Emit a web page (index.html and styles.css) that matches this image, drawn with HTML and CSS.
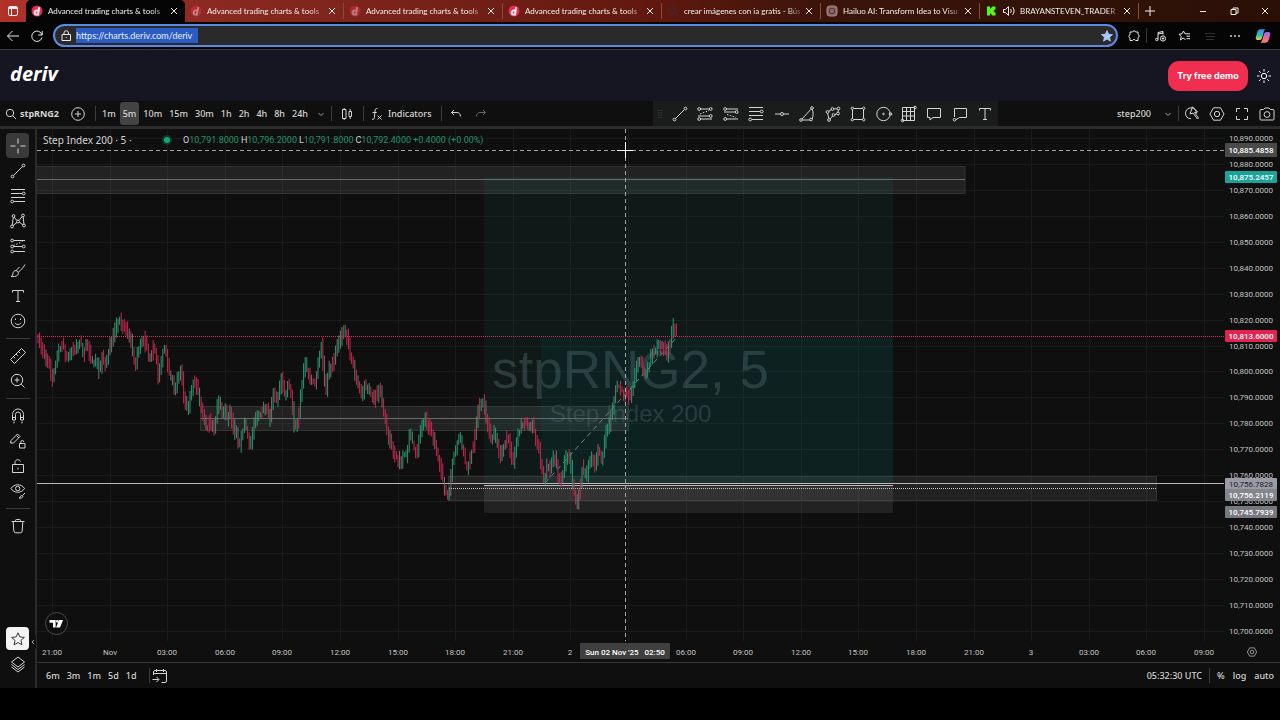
FILE: index.html
```html
<!DOCTYPE html>
<html lang="en">
<head>
    <meta charset="UTF-8">
    <meta name="viewport" content="width=device-width, initial-scale=1.0">
    <title>Advanced trading charts &amp; tools</title>
    <link rel="stylesheet" href="styles.css">
</head>
<body>
    <!-- Icon sprite -->
    <svg class="sprite" aria-hidden="true">
        <symbol id="i-close" viewBox="0 0 18 18"><path d="M6 6l6 6M12 6l-6 6"/></symbol>
        <symbol id="i-plus" viewBox="0 0 18 18"><path d="M9 4v10M4 9h10"/></symbol>
        <symbol id="i-deriv" viewBox="0 0 18 18"><circle class="brand" cx="9" cy="9" r="5.5"/><path class="thick" d="M11.2 5.2l-1.2 7.3H8.2a1.5 1.5 0 0 1-1.5-1.9c.2-1.2 1-2 2.1-2h1.7"/></symbol>
        <symbol id="i-search" viewBox="0 0 18 18"><circle cx="8" cy="8" r="3.7"/><path d="M10.8 10.8l3.2 3.2"/></symbol>
        <symbol id="i-addcircle" viewBox="0 0 18 18"><circle cx="9" cy="9" r="6.3"/><path d="M9 6v6M6 9h6"/></symbol>
        <symbol id="i-chevron" viewBox="0 0 18 18"><path d="M6.5 8L9 10.5 11.5 8"/></symbol>
        <symbol id="i-candles" viewBox="0 0 18 18"><path d="M4.500 4.500h3.500v9H4.500zM6.200 3v1.500M6.200 13.500V15M11 6.500h2.500v5H11zM12.200 4v2.500M12.200 11.500V14"/></symbol>
        <symbol id="i-fx" viewBox="0 0 18 18"><path d="M9.500 3.500C7.500 3 7.200 4.300 7 6l-.6 6.500c-.2 1.500-.8 2.200-2.400 1.800M4.500 7.500h4.200M9.500 10.500l4 4M13.500 10.500l-4 4"/></symbol>
        <symbol id="i-undo" viewBox="0 0 18 18"><path d="M7 5L4.500 7.500 7 10M4.500 7.500H10c2.300 0 3.500 1.500 3.500 4"/></symbol>
        <symbol id="i-redo" viewBox="0 0 18 18"><path d="M11 5l2.500 2.500L11 10M13.500 7.500H8c-2.300 0-3.500 1.500-3.500 4"/></symbol>
        <symbol id="i-cross" viewBox="0 0 18 18"><path d="M9 1.500v5M9 11.500v5M1.500 9h5M11.500 9h5"/></symbol>
        <symbol id="i-trend" viewBox="0 0 18 18"><circle cx="3.500" cy="14.500" r="1.400"/><circle cx="14.500" cy="3.500" r="1.400"/><path d="M4.500 13.500l9-9"/></symbol>
        <symbol id="i-fib" viewBox="0 0 18 18"><path d="M2 2.500h14M2 6.500h11M2 10.500h14M5 14.500h11"/><circle cx="14.700" cy="6.500" r="1.400"/><circle cx="3.200" cy="14.500" r="1.400"/></symbol>
        <symbol id="i-pattern" viewBox="0 0 18 18"><circle cx="4.500" cy="4" r="1.400"/><circle cx="3" cy="14.500" r="1.400"/><circle cx="9" cy="9.500" r="1.400"/><circle cx="14" cy="3.500" r="1.400"/><circle cx="15" cy="13.500" r="1.400"/><path d="M4.300 5.400L3.200 13M5.200 5.200L8 8.500M10 8.500l3.200-4M14.200 5l.7 7M4 13.500l4-3M10.200 10.200l3.600 2.600"/></symbol>
        <symbol id="i-forecast" viewBox="0 0 18 18"><circle cx="3.200" cy="3.500" r="1.400"/><circle cx="3.200" cy="9.500" r="1.400"/><circle cx="14.700" cy="9.500" r="1.400"/><circle cx="3.200" cy="14.500" r="1.400"/><path d="M4.600 3.500H16M4.600 9.500h8.600M4.600 14.500H16"/><path stroke-dasharray="1.500 1.500" d="M4.500 8.500l9-4"/></symbol>
        <symbol id="i-long" viewBox="0 0 18 18"><circle cx="3.200" cy="4" r="1.400"/><circle cx="14.700" cy="4" r="1.400"/><circle cx="3.200" cy="14" r="1.400"/><circle cx="14.700" cy="11" r="1.400"/><path d="M4.600 4h8.600M2 11h11.200M4.600 14H16"/><path stroke-dasharray="1.500 1.500" d="M4 9l9-3.500"/></symbol>
        <symbol id="i-short" viewBox="0 0 18 18"><circle cx="3.200" cy="4" r="1.400"/><circle cx="14.700" cy="7" r="1.400"/><circle cx="3.200" cy="14" r="1.400"/><path d="M4.600 4H16M2 7h11.200M4.600 14H16"/><path stroke-dasharray="1.500 1.500" d="M5 9.500l9 3"/></symbol>
        <symbol id="i-brush" viewBox="0 0 18 18"><path d="M2 14.500c1.800-.5 1.700-2 2.200-3.800.6-2 2.500-2.700 4-1.700 1.500 1.100 1.600 3 .2 4.300-1.500 1.300-4 1.500-6.400 1.200zM7.500 8.500c1-1.800 1.500-2.500 3-3M9.500 10c2-1.500 5-4.500 6.500-7.500"/></symbol>
        <symbol id="i-text" viewBox="0 0 18 18"><path d="M3.500 5.500v-2h11v2M9 3.500v11M7 14.500h4"/></symbol>
        <symbol id="i-smile" viewBox="0 0 18 18"><circle cx="9" cy="9" r="6.800"/><path d="M5.800 10.800c1.500 2.300 4.900 2.300 6.400 0M6.500 6.500v1.500M11.500 6.500v1.500"/></symbol>
        <symbol id="i-ruler" viewBox="0 0 18 18"><path d="M1.500 12.500l11-11 4 4-11 11zM4.500 9.500l1.700 1.700M7 7l1.700 1.700M9.500 4.500l1.700 1.700"/></symbol>
        <symbol id="i-zoom" viewBox="0 0 18 18"><circle cx="8" cy="8" r="5.700"/><path d="M12.200 12.200l3.300 3.300M8 5.500v5M5.500 8h5"/></symbol>
        <symbol id="i-magnet" viewBox="0 0 18 18"><path d="M3.500 13V7.500a5.500 5.500 0 0 1 11 0V13h-3V7.500a2.500 2.500 0 0 0-5 0V13zM3.500 10.500h3M11.500 10.500h3M5 14.500v2M13 14.500v2"/></symbol>
        <symbol id="i-penlock" viewBox="0 0 18 18"><path d="M1.500 11l.5-2.500 6.500-6.500 2.500 2.500L4.500 11zM7.500 3.500L10 6M10.500 11.500h5.500v4.500h-5.500zM11.800 11.500V10a1.500 1.500 0 0 1 3 0"/></symbol>
        <symbol id="i-lock" viewBox="0 0 18 18"><path d="M3.500 7.500h11v8h-11zM6 7.500V5.500c0-3.300 4.500-3.700 5.500-1M9 10.500v2"/></symbol>
        <symbol id="i-eye" viewBox="0 0 18 18"><path d="M2 6.500c3-5 10.500-5 13.500 0-3 5-10.500 5-13.500 0z"/><circle cx="8.700" cy="6.500" r="2.200"/><path d="M10 16c1.500 0 1-2.500 2.800-2.500 1.700 0 1 2.500-.8 2.500zM13.500 13.500l2.500-2.500"/></symbol>
        <symbol id="i-trash" viewBox="0 0 18 18"><path d="M2.500 4.500h13M4.200 4.500l.6 9.500a2 2 0 0 0 2 1.800h4.400a2 2 0 0 0 2-1.800l.6-9.500M6.500 4.500v-1a1 1 0 0 1 1-1h3a1 1 0 0 1 1 1v1"/></symbol>
        <symbol id="i-star" viewBox="0 0 18 18"><path d="M9 2l2.100 4.700 5.100.5-3.900 3.400 1.200 5L9 13l-4.500 2.600 1.200-5L1.800 7.200l5.100-.5z"/></symbol>
        <symbol id="i-layers" viewBox="0 0 18 18"><path d="M9 2l6.500 5L9 12 2.500 7zM2.500 9.500l6.500 5 6.500-5M2.500 12l6.500 5 6.500-5"/></symbol>
        <symbol id="i-hline" viewBox="0 0 18 18"><circle cx="9" cy="9" r="1.500"/><path d="M2 9h5.500M10.500 9H16"/></symbol>
        <symbol id="i-fan" viewBox="0 0 18 18"><circle cx="3" cy="15" r="1.300"/><circle cx="14" cy="3" r="1.300"/><path d="M4 14L13.200 4M14.200 4.300c1.300 3.200 1.200 6.500 0 9.700M4.300 15H12"/><circle cx="13" cy="14.500" r="1.300"/></symbol>
        <symbol id="i-polyline" viewBox="0 0 18 18"><circle cx="3.500" cy="7" r="1.400"/><circle cx="8.500" cy="4" r="1.400"/><circle cx="14.500" cy="3.500" r="1.400"/><circle cx="14" cy="8.500" r="1.400"/><circle cx="9.500" cy="10" r="1.400"/><circle cx="5" cy="15" r="1.400"/><path d="M4.600 6.300l2.700-1.500M9.900 3.900h3.200M14.400 4.900L14 7.100M12.600 8.900l-1.800.7M3.700 8.400l1.100 5.200M6 14l2.700-3"/></symbol>
        <symbol id="i-rect" viewBox="0 0 18 18"><path d="M4.500 3.500h9M4.500 14.500h9M3.500 4.500v9M14.500 4.500v9"/><circle cx="3.300" cy="3.300" r="1.200"/><circle cx="14.700" cy="3.300" r="1.200"/><circle cx="3.300" cy="14.700" r="1.200"/><circle cx="14.700" cy="14.700" r="1.200"/></symbol>
        <symbol id="i-circle" viewBox="0 0 18 18"><circle cx="8.500" cy="9" r="6.700"/><circle cx="8.500" cy="9" r=".8"/><circle class="knob" cx="15.500" cy="9" r="1.300"/></symbol>
        <symbol id="i-gann" viewBox="0 0 18 18"><path d="M2.500 2.500h12v13h-12zM6.500 2.500v13M10.500 2.500v13M2.500 6.500h12M2.500 11h12"/><circle class="knob" cx="2.500" cy="15.500" r="1.300"/><circle class="knob" cx="15" cy="2.500" r="1.300"/></symbol>
        <symbol id="i-note" viewBox="0 0 18 18"><path d="M2.500 3.500h13v9H8l-3 2.500v-2.500H2.500z"/></symbol>
        <symbol id="i-callout" viewBox="0 0 18 18"><path d="M3.500 9V3.500h12v9H8.500L4.500 15"/><circle cx="3.500" cy="14.700" r="1.300"/><path d="M3.500 9v3"/></symbol>
        <symbol id="i-replay" viewBox="0 0 18 18"><path d="M13.500 8.500A5.500 5.500 0 1 0 8 13.800M9.500 1.800L7 9l3-1 4.500 6 1-1-4-5.500 3-.5z"/></symbol>
        <symbol id="i-hex" viewBox="0 0 18 18"><path d="M5.500 2.800h7L16 9l-3.500 6.200h-7L2 9z"/><circle cx="9" cy="9" r="2.700"/></symbol>
        <symbol id="i-full" viewBox="0 0 18 18"><path d="M3.500 7V3.500H7M11 3.500h3.500V7M14.500 11v3.500H11M7 14.500H3.500V11"/></symbol>
        <symbol id="i-camera" viewBox="0 0 18 18"><path d="M2 5.500a1 1 0 0 1 1-1h2.500L7 3h4l1.500 1.500H15a1 1 0 0 1 1 1V14a1 1 0 0 1-1 1H3a1 1 0 0 1-1-1z"/><circle cx="9" cy="9.500" r="2.900"/></symbol>
        <symbol id="i-goto" viewBox="0 0 18 18"><path d="M2.500 8V5a1.500 1.500 0 0 1 1.500-1.500h10A1.500 1.500 0 0 1 15.500 5v9a1.500 1.500 0 0 1-1.500 1.500h-3.500M2.500 6.500h13M5.500 2v3M12.500 2v3M1.500 12.500h6M5.500 10l2.500 2.500L5.500 15"/></symbol>
        <symbol id="i-sun" viewBox="0 0 18 18"><circle cx="9" cy="9" r="2.700"/><path d="M9 2v2.500M9 13.500V16M2 9h2.500M13.500 9H16M4 4l1.700 1.700M12.300 12.300L14 14M4 14l1.700-1.700M12.300 5.700L14 4"/></symbol>
        <symbol id="i-back" viewBox="0 0 18 18"><path d="M3.500 9H15M8.500 4L3.500 9l5 5"/></symbol>
        <symbol id="i-reload" viewBox="0 0 18 18"><path d="M14 8A5.200 5.200 0 1 0 14 10.500M14.200 4v4h-4"/></symbol>
        <symbol id="i-site" viewBox="0 0 18 18"><path d="M5 7.500h8.500v6H5zM7 7.500V6a2.200 2.200 0 0 1 4.500 0v1.500M9.200 10v1"/></symbol>
    </svg>

    <div class="tab-bar">
        <button class="tab-actions" aria-label="Tab actions"><svg class="icon" viewBox="0 0 18 18"><rect x="4.500" y="4.500" width="9" height="9" rx="1.500"/><path class="thick" d="M5 6h8"/><path d="M7.500 6v7"/></svg></button>
        <div class="tab active"><svg class="icon"><use href="#i-deriv"/></svg><span>Advanced trading charts &amp; tools</span><button aria-label="Close tab"><svg class="icon"><use href="#i-close"/></svg></button></div>
        <div class="tab"><svg class="icon faded"><use href="#i-deriv"/></svg><span>Advanced trading charts &amp; tools</span><button aria-label="Close tab"><svg class="icon"><use href="#i-close"/></svg></button></div>
        <div class="tab"><svg class="icon faded"><use href="#i-deriv"/></svg><span>Advanced trading charts &amp; tools</span><button aria-label="Close tab"><svg class="icon"><use href="#i-close"/></svg></button></div>
        <div class="tab"><svg class="icon"><use href="#i-deriv"/></svg><span>Advanced trading charts &amp; tools</span><button aria-label="Close tab"><svg class="icon"><use href="#i-close"/></svg></button></div>
        <div class="tab"><svg class="icon dark"><use href="#i-search"/></svg><span>crear imágenes con ia gratis - Bús</span><button aria-label="Close tab"><svg class="icon"><use href="#i-close"/></svg></button></div>
        <div class="tab"><svg class="icon" viewBox="0 0 18 18"><rect class="hailuo" x="4" y="4" width="10" height="10" rx="2.500"/><circle class="hailuo-ring" cx="9" cy="9" r="2.800"/></svg><span>Hailuo AI: Transform Idea to Visu</span><button aria-label="Close tab"><svg class="icon"><use href="#i-close"/></svg></button></div>
        <div class="tab"><svg class="icon" viewBox="0 0 18 18"><path class="kick" d="M5 4.500h3v2h1v-1h1v-1h3.500v3h-1v1h-1v1h1v1h1v3H10v-1H9v-1H8v2H5z"/></svg><svg class="icon" viewBox="0 0 18 18"><path d="M3.500 7.500h2l3-3v9l-3-3h-2zM10.500 7c1 1.200 1 2.800 0 4M12.500 5c2 2.200 2 5.800 0 8"/></svg><span>BRAYANSTEVEN_TRADER St</span><button aria-label="Close tab"><svg class="icon"><use href="#i-close"/></svg></button></div>
        <button class="new-tab" aria-label="New tab"><svg class="icon"><use href="#i-plus"/></svg></button>
        <div class="window-buttons">
            <button aria-label="Minimize"><svg class="icon" viewBox="0 0 18 18"><path d="M6 9.500h6"/></svg></button>
            <button aria-label="Restore"><svg class="icon" viewBox="0 0 18 18"><path d="M6 7.500h5v5H6zM8 7.500v-1.500h5v5h-2"/></svg></button>
            <button aria-label="Close"><svg class="icon"><use href="#i-close"/></svg></button>
        </div>
    </div>

    <div class="address-bar">
        <button aria-label="Back"><svg class="icon"><use href="#i-back"/></svg></button>
        <button aria-label="Refresh"><svg class="icon"><use href="#i-reload"/></svg></button>
        <div class="url-box">
            <svg class="icon"><use href="#i-site"/></svg>
            <input type="text" aria-label="Address" value="https://charts.deriv.com/deriv">
            <button class="favorite" aria-label="Favorite"><svg class="icon"><use href="#i-star"/></svg></button>
        </div>
        <div class="browser-buttons">
            <button aria-label="Extensions"><svg class="icon" viewBox="0 0 18 18"><path d="M5 5h2.500a1.700 1.700 0 0 1 3.200 0H13v2.500a1.700 1.700 0 0 1 0 3.200V13.500h-2.500a1.600 1.600 0 0 0-3 0H5V11a1.700 1.700 0 0 1 0-3.200z"/></svg></button>
            <i class="bar"></i>
            <button aria-label="Media"><svg class="icon" viewBox="0 0 18 18"><path d="M7 12.500V5.500l5-1v3M7 7l5-1"/><circle cx="5.800" cy="12.500" r="1.200"/><circle cx="12" cy="11.500" r="2.600"/><path d="M12 10.300v2.400M10.800 11.500h2.400"/></svg></button>
            <button aria-label="Collections"><svg class="icon" viewBox="0 0 18 18"><path d="M9.500 12.500L7 11l-2.500 2 .7-3.500L3 7.200l3-.4L7.500 4 9 6.800h5M10.500 9.200H14M10.500 11.700H14"/></svg></button>
            <button aria-label="Profile"><svg class="icon dark" viewBox="0 0 18 18"><path d="M4 6.500h10M5 9.500h9M5 12.500h8"/></svg></button>
            <button aria-label="More"><svg class="icon dots" viewBox="0 0 18 18"><circle cx="5" cy="9" r=".9"/><circle cx="9" cy="9" r=".9"/><circle cx="13" cy="9" r=".9"/></svg></button>
            <button class="copilot" aria-label="Copilot"><svg viewBox="0 0 18 18">
                <defs>
                    <linearGradient id="cpA" x1="0" y1="0" x2="0" y2="1"><stop offset="0" stop-color="#3b8cf0"/><stop offset=".6" stop-color="#35c3a6"/><stop offset="1" stop-color="#f0d23c"/></linearGradient>
                    <linearGradient id="cpB" x1="0" y1="0" x2="0" y2="1"><stop offset="0" stop-color="#8b6cf2"/><stop offset=".5" stop-color="#ee5fa5"/><stop offset="1" stop-color="#f58b5a"/></linearGradient>
                </defs>
                <path fill="url(#cpA)" d="M6 1.500h6c-1.300.4-1.700 1.500-2.200 3.200l-1.700 6c-.5 1.700-1.300 2.800-2.800 2.800H3C.8 13.500.5 11.500 1.100 9.500L2.500 5c.6-2 1.500-3.500 3.500-3.500z"/>
                <path fill="url(#cpB)" d="M12 16.500H6c1.300-.4 1.700-1.500 2.200-3.200l1.700-6c.5-1.700 1.300-2.800 2.800-2.800H15c2.200 0 2.500 2 1.900 4L15.500 13c-.6 2-1.500 3.500-3.500 3.500z"/>
            </svg></button>
        </div>
    </div>

    <div class="app">
        <header class="site-header">
            <a class="logo" href="#">deriv</a>
            <button class="demo-btn">Try free demo</button>
            <button class="theme-btn" aria-label="Theme"><svg class="icon"><use href="#i-sun"/></svg></button>
        </header>

        <div class="toolbar">
            <button class="symbol-btn"><svg class="icon"><use href="#i-search"/></svg>stpRNG2</button>
            <button class="tool" aria-label="Compare"><svg class="icon"><use href="#i-addcircle"/></svg></button>
            <i class="bar"></i>
            <div class="intervals">
                <button>1m</button><button class="selected">5m</button><button>10m</button><button>15m</button><button>30m</button><button>1h</button><button>2h</button><button>4h</button><button>8h</button><button>24h</button>
            </div>
            <button class="tool small" aria-label="More intervals"><svg class="icon"><use href="#i-chevron"/></svg></button>
            <i class="bar"></i>
            <button class="tool wide" aria-label="Chart type"><svg class="icon"><use href="#i-candles"/></svg></button>
            <i class="bar"></i>
            <button class="indicators"><svg class="icon"><use href="#i-fx"/></svg>Indicators</button>
            <i class="bar"></i>
            <button class="tool" aria-label="Undo"><svg class="icon"><use href="#i-undo"/></svg></button>
            <button class="tool" aria-label="Redo"><svg class="icon faded"><use href="#i-redo"/></svg></button>
            <div class="favorites">
                <svg class="icon grip" viewBox="0 0 18 18"><path d="M7 4.500h1M10 4.500h1M7 7.500h1M10 7.500h1M7 10.500h1M10 10.500h1M7 13.500h1M10 13.500h1"/></svg>
                <button aria-label="Trend line"><svg class="icon"><use href="#i-trend"/></svg></button>
                <button aria-label="Long position"><svg class="icon"><use href="#i-long"/></svg></button>
                <button aria-label="Short position"><svg class="icon"><use href="#i-short"/></svg></button>
                <button aria-label="Fib retracement"><svg class="icon"><use href="#i-fib"/></svg></button>
                <button aria-label="Horizontal line"><svg class="icon"><use href="#i-hline"/></svg></button>
                <button aria-label="Fib wedge"><svg class="icon"><use href="#i-fan"/></svg></button>
                <button aria-label="Path"><svg class="icon"><use href="#i-polyline"/></svg></button>
                <button aria-label="Rectangle"><svg class="icon"><use href="#i-rect"/></svg></button>
                <button aria-label="Circle"><svg class="icon"><use href="#i-circle"/></svg></button>
                <button aria-label="Gann box"><svg class="icon"><use href="#i-gann"/></svg></button>
                <button aria-label="Comment"><svg class="icon"><use href="#i-note"/></svg></button>
                <button aria-label="Callout"><svg class="icon"><use href="#i-callout"/></svg></button>
                <button aria-label="Text"><svg class="icon"><use href="#i-text"/></svg></button>
            </div>
            <div class="toolbar-right">
                <button class="layout-btn">step200</button>
                <button class="tool small" aria-label="Layouts"><svg class="icon"><use href="#i-chevron"/></svg></button>
                <i class="bar"></i>
                <button class="tool" aria-label="Quick search"><svg class="icon"><use href="#i-replay"/></svg></button>
                <button class="tool" aria-label="Settings"><svg class="icon"><use href="#i-hex"/></svg></button>
                <button class="tool" aria-label="Fullscreen"><svg class="icon"><use href="#i-full"/></svg></button>
                <button class="tool" aria-label="Snapshot"><svg class="icon"><use href="#i-camera"/></svg></button>
            </div>
        </div>

        <div class="workspace">
            <nav class="side-tools">
                <button class="selected" aria-label="Cross"><svg class="icon"><use href="#i-cross"/></svg></button>
                <button aria-label="Trend line"><svg class="icon"><use href="#i-trend"/></svg></button>
                <button aria-label="Fibonacci"><svg class="icon"><use href="#i-fib"/></svg></button>
                <button aria-label="Patterns"><svg class="icon"><use href="#i-pattern"/></svg></button>
                <button aria-label="Forecasting"><svg class="icon"><use href="#i-forecast"/></svg></button>
                <button aria-label="Brush"><svg class="icon"><use href="#i-brush"/></svg></button>
                <button aria-label="Text"><svg class="icon"><use href="#i-text"/></svg></button>
                <button aria-label="Icons"><svg class="icon"><use href="#i-smile"/></svg></button>
                <hr>
                <button aria-label="Measure"><svg class="icon"><use href="#i-ruler"/></svg></button>
                <button aria-label="Zoom in"><svg class="icon"><use href="#i-zoom"/></svg></button>
                <hr>
                <button aria-label="Magnet"><svg class="icon"><use href="#i-magnet"/></svg></button>
                <button aria-label="Keep drawing"><svg class="icon"><use href="#i-penlock"/></svg></button>
                <button aria-label="Lock drawings"><svg class="icon"><use href="#i-lock"/></svg></button>
                <button aria-label="Hide drawings"><svg class="icon"><use href="#i-eye"/></svg></button>
                <hr>
                <button aria-label="Remove"><svg class="icon"><use href="#i-trash"/></svg></button>
                <div class="side-bottom">
                    <button class="pinned" aria-label="Favorites toolbar"><svg class="icon"><use href="#i-star"/></svg></button>
                    <button aria-label="Object tree"><svg class="icon"><use href="#i-layers"/></svg></button>
                </div>
                <button class="collapse" aria-label="Collapse"><svg viewBox="0 0 4 10"><path d="M3 3L1 5l2 2"/></svg></button>
            </nav>

            <main class="chart-area">
                <div class="chart">
                    <svg id="plot"></svg>
                    <svg id="price-axis"></svg>
                    <svg id="time-axis"></svg>
                    <button class="axis-settings" aria-label="Axis settings"><svg class="icon"><use href="#i-hex"/></svg></button>
                    <div class="legend">
                        <span class="legend-title">Step Index 200 · 5 ·</span>
                        <i class="status"></i>
                        <span>O<b>10,791.8000</b></span>
                        <span>H<b>10,796.2000</b></span>
                        <span>L<b>10,791.8000</b></span>
                        <span>C<b>10,792.4000</b></span>
                        <span><b>+0.4000 (+0.00%)</b></span>
                    </div>
                    <a class="tv-logo" href="#" aria-label="TradingView"><svg viewBox="0 0 24 24"><path d="M4 8h7v8.500H8V11H4zM15 16.500h-3.500L15 8h4.500L16 16.500z"/><circle cx="13" cy="9.500" r="1.500"/></svg></a>
                </div>
                <div class="bottom-bar">
                    <div class="ranges">
                        <button>6m</button><button>3m</button><button>1m</button><button>5d</button><button>1d</button>
                    </div>
                    <i class="bar"></i>
                    <button aria-label="Go to date"><svg class="icon"><use href="#i-goto"/></svg></button>
                    <div class="bottom-right">
                        <button>05:32:30 UTC</button>
                        <i class="bar"></i>
                        <button>%</button><button>log</button><button>auto</button>
                    </div>
                </div>
            </main>
        </div>
    </div>
    <script src="chart.js"></script>
</body>
</html>
```
FILE: styles.css
```css
* {
    box-sizing: border-box;
}
body {
    margin: 0;
    height: 100vh;
    padding-bottom: 32px;
    display: flex;
    flex-direction: column;
    background: #000;
    color: #d4d4d4;
    font-family: "Noto Sans", "Open Sans", sans-serif;
    font-size: 9px;
    overflow: hidden;
}
button {
    display: flex;
    align-items: center;
    justify-content: center;
    padding: 0;
    border: none;
    background: none;
    color: inherit;
    font: inherit;
    cursor: pointer;
}
.sprite {
    position: absolute;
    width: 0;
    height: 0;
}
.icon {
    width: 18px;
    height: 18px;
    flex: none;
    fill: none;
    stroke: currentColor;
    stroke-width: 1;
}
.thick {
    stroke-width: 2;
}
.brand {
    fill: #f0284f;
    stroke: none;
}
.faded {
    opacity: 0.45;
}
.dark {
    color: #34302e;
}
.bar {
    flex: none;
    width: 1px;
    height: 15px;
    background: #3c3c3c;
}

/* Browser tabs */
.tab-bar {
    display: flex;
    height: 22px;
    flex: none;
    background: linear-gradient(90deg, #b03229 0, #8b2a22 200px, #62190f 50%, #3a1409 65%, #2a1007);
    color: #f2eeee;
    font-family: Lato, sans-serif;
    font-size: 8px;
}
.tab-actions {
    width: 26px;
}
.tab {
    display: flex;
    align-items: center;
    flex: 0 1 159px;
    min-width: 0;
    height: 16px;
    margin-top: 3px;
    padding: 0 2px;
    border-right: 1px solid #8a4a40;
}
.tab.active {
    height: 22px;
    margin-top: 0;
    background: #050505;
    border: none;
    border-radius: 5px 5px 0 0;
}
.tab span {
    flex: 1;
    margin-left: 2px;
    overflow: hidden;
    white-space: nowrap;
    mask-image: linear-gradient(90deg, #000 88%, transparent 105%);
}
.hailuo {
    fill: #8d6a69;
    stroke: #a98786;
}
.hailuo-ring {
    stroke: #4a2c2c;
}
.kick {
    fill: #53fc18;
    stroke: none;
}
.new-tab {
    width: 22px;
}
.window-buttons {
    display: flex;
    margin-left: auto;
}
.window-buttons button {
    width: 31px;
}

/* Address bar */
.address-bar {
    display: flex;
    align-items: center;
    height: 28px;
    flex: none;
    padding: 0 9px 0 1px;
    border-bottom: 1px solid #3a3b3f;
    background: #050505;
    color: #e8e8e8;
}
.address-bar > button {
    width: 24px;
}
.url-box {
    display: flex;
    align-items: center;
    flex: 1;
    height: 23px;
    margin-left: 4px;
    padding: 0 2px;
    border: 2px solid #5b8be0;
    border-radius: 12px;
    background: #2a2a2a;
}
.url-box input {
    width: 122px;
    height: 15px;
    margin: 0 auto 0 1px;
    padding: 0;
    border: none;
    outline: none;
    background: #2b5cc4;
    color: #e6eeff;
    font-family: Lato, sans-serif;
    font-size: 9px;
}
.favorite .icon {
    width: 14px;
    height: 14px;
    color: #a9c8ff;
    fill: currentColor;
}
.browser-buttons {
    display: flex;
    align-items: center;
    margin-left: 3px;
}
.browser-buttons button {
    width: 25px;
}
.browser-buttons .dots {
    fill: currentColor;
    stroke: none;
}
.browser-buttons .copilot {
    width: 16px;
    margin-left: 8px;
}
.copilot svg {
    width: 16px;
    height: 16px;
}

/* Site header */
.app {
    display: flex;
    flex-direction: column;
    flex: 1;
    min-height: 0;
    background: #0f0f0f;
}
.site-header {
    display: flex;
    align-items: center;
    height: 51px;
    flex: none;
    padding: 0 7px 0 10px;
    background: #151621;
}
.logo {
    margin-right: auto;
    padding-bottom: 4px;
    color: #fff;
    font-family: "Noto Sans", sans-serif;
    font-size: 20px;
    font-weight: 700;
    font-style: italic;
    text-decoration: none;
}
.demo-btn {
    width: 80px;
    height: 30px;
    border-radius: 11px;
    background: #f02e50;
    color: #fff;
    font-family: Inter, sans-serif;
    font-weight: 700;
}
.theme-btn {
    margin-left: 7px;
    color: #fff;
}

/* Chart toolbar */
.toolbar {
    display: flex;
    align-items: center;
    height: 28px;
    flex: none;
    padding: 0 1px 0 2px;
    border-bottom: 3px solid #2b2b2b;
    font-weight: 500;
}
.symbol-btn {
    width: 59px;
    justify-content: flex-start;
    font-weight: 700;
}
.tool {
    width: 25px;
    height: 24px;
}
.tool.small {
    width: 20px;
    color: #a0a0a0;
}
.tool.wide {
    width: 31px;
}
.symbol-btn + .tool {
    width: 34px;
}
.intervals {
    display: flex;
    gap: 1px;
    margin-left: 3px;
}
.intervals button {
    height: 23px;
    padding: 0 3px;
    border-radius: 3px;
}
.intervals .selected {
    background: #434343;
}
.indicators {
    padding: 0 9px 0 4px;
    gap: 2px;
}
.indicators + .bar {
    margin-right: 2px;
}
.favorites {
    display: flex;
    align-items: center;
    justify-content: space-between;
    align-self: stretch;
    width: 345px;
    margin-left: auto;
    background: #1a1b1b;
}
.favorites button {
    width: 25px;
    height: 25px;
}
.favorites .grip {
    width: 14px;
    color: #6a6a6a;
}
.toolbar-right {
    display: flex;
    align-items: center;
    margin-left: 119px;
}
.layout-btn {
    padding-right: 7px;
}

/* Drawing tools */
.workspace {
    display: flex;
    flex: 1;
    min-height: 0;
}
.side-tools {
    position: relative;
    display: flex;
    flex-direction: column;
    align-items: center;
    flex: none;
    width: 37px;
    padding: 4px 0 12px;
    border-right: 2px solid #2b2b2b;
}
.side-tools button {
    width: 23px;
    height: 25px;
    border-radius: 4px;
}
.side-tools .selected {
    background: #3a3a3a;
}
.side-tools hr {
    width: 24px;
    height: 1px;
    margin: 5px 0 4px;
    border: none;
    background: #3c3c3c;
}
.side-bottom {
    margin-top: auto;
}
.side-tools .pinned {
    height: 23px;
    margin-bottom: 1px;
    background: #f4f4f4;
    color: #222;
}
.pinned .icon {
    width: 16px;
    height: 16px;
}
.side-tools .collapse {
    position: absolute;
    right: -1px;
    bottom: 38px;
    width: 6px;
    height: 16px;
    background: #0f0f0f;
}
.collapse svg {
    width: 4px;
    height: 10px;
    fill: none;
    stroke: #aaa;
}

/* Chart */
.chart-area {
    display: flex;
    flex-direction: column;
    flex: 1;
    min-width: 0;
}
.chart {
    position: relative;
    display: grid;
    grid-template-columns: 1fr 56px;
    grid-template-rows: 1fr 21px;
    flex: 1;
    min-height: 0;
}
.chart > svg {
    display: block;
    width: 100%;
    height: 100%;
    min-width: 0;
    min-height: 0;
}
.axis-settings .icon {
    width: 12px;
    height: 12px;
}
#price-axis text, #time-axis text {
    fill: #c4c4c4;
    font-family: Roboto, sans-serif;
    font-size: 8px;
    text-anchor: middle;
}
#price-axis .tag-text, #time-axis .tag-text {
    fill: #fff;
    font-weight: 500;
}
#price-axis .tag-dark {
    fill: #1c1c22;
}
.grid {
    stroke: #1a1a1a;
}
.zone {
    fill: rgba(150, 150, 150, 0.15);
    stroke: #333;
}
.zone-mid {
    stroke: #6a6a6a;
}
.zone-dots {
    stroke: #c8c8c8;
    stroke-dasharray: 1 1;
}
.profit {
    fill: rgba(16, 150, 136, 0.08);
}
.profit-run {
    fill: rgba(8, 120, 130, 0.09);
}
.stop {
    fill: rgba(150, 145, 155, 0.15);
}
.level {
    stroke: #b9b6bd;
}
.run-line {
    stroke: #6f8a84;
    stroke-dasharray: 5 4;
}
.last-price {
    stroke: #d8305a;
    stroke-dasharray: 1 1;
}
.up {
    stroke: #2b9a72;
}
.down {
    stroke: #c6284f;
}
.flat {
    stroke: #77716f;
}
.watermark {
    fill: rgba(170, 190, 200, 0.2);
    font-family: "Liberation Sans", Arial, sans-serif;
    text-anchor: middle;
}
.watermark.big {
    font-size: 53px;
}
.watermark.sub {
    font-size: 24px;
}
.crosshair {
    stroke: #a5a5a5;
    stroke-dasharray: 4 3;
}
.pointer {
    stroke: #fff;
}
.legend {
    position: absolute;
    top: 4px;
    left: 6px;
    display: flex;
    align-items: center;
    gap: 2px;
    height: 14px;
    font-family: Roboto, sans-serif;
    font-size: 9px;
    white-space: nowrap;
}
.legend-title {
    width: 117px;
    font-family: "Noto Sans", sans-serif;
    font-size: 10px;
}
.legend b {
    color: #23946c;
    font-weight: 400;
}
.status {
    width: 10px;
    height: 10px;
    margin-right: 9px;
    border: 2px solid #0c3a2b;
    border-radius: 50%;
    background: #16a67a;
}
.tv-logo {
    position: absolute;
    left: 8px;
    bottom: 27px;
    width: 23px;
    height: 23px;
    border: 1px solid #4a4a4a;
    border-radius: 50%;
    background: #0f0f0f;
}
.tv-logo svg {
    display: block;
    fill: #fff;
}

/* Range bar */
.bottom-bar {
    display: flex;
    align-items: center;
    height: 26px;
    flex: none;
    padding: 0 2px 0 6px;
    border-top: 1px solid #363636;
    font-weight: 500;
}
.bottom-bar button {
    height: 24px;
    padding: 0 4px;
}
.ranges {
    display: flex;
    gap: 1px;
}
.ranges button {
    padding: 0 3px;
}
.bottom-bar > .bar {
    margin: 0 -3px 0 10px;
}
.bottom-right {
    display: flex;
    align-items: center;
    margin-left: auto;
}
.bottom-right .bar {
    margin: 0 3px;
}
```
FILE: chart.js
```js
const plot = document.getElementById("plot");
const priceAxis = document.getElementById("price-axis");
const timeAxis = document.getElementById("time-axis");

const TOP_PRICE = 10890;
const TOP_Y = 9;
const PX_PER_POINT = 2.594;
const BAR_STEP = 1.6;

function add(parent, tag, attrs, text) {
    const el = document.createElementNS("http://www.w3.org/2000/svg", tag);
    for (const key in attrs) {
        el.setAttribute(key, attrs[key]);
    }
    if (text) el.textContent = text;
    parent.appendChild(el);
    return el;
}

function priceY(price) {
    return Math.round(TOP_Y + (TOP_PRICE - price) * PX_PER_POINT);
}

function line(cls, x1, y1, x2, y2) {
    add(plot, "line", { class: cls, x1, y1, x2, y2 });
}

function box(cls, x, y, width, height) {
    add(plot, "rect", { class: cls, x, y, width, height });
}

function formatPrice(price) {
    return price.toLocaleString("en-US", { minimumFractionDigits: 4 });
}

// Grid and axis labels
for (let price = 10890; price >= 10700; price -= 10) {
    const y = priceY(price);
    line("grid", 0, y + 0.5, "100%", y + 0.5);
    add(priceAxis, "text", { x: 27, y: y + 3 }, formatPrice(price));
}

const times = ["21:00", "Nov", "03:00", "06:00", "09:00", "12:00", "15:00", "18:00", "21:00", "2", "",
    "06:00", "09:00", "12:00", "15:00", "18:00", "21:00", "3", "03:00", "06:00", "09:00"];
times.forEach((label, i) => {
    const x = Math.round(15 + i * 57.6);
    line("grid", x + 0.5, 0, x + 0.5, "100%");
    add(timeAxis, "text", { x, y: 14 }, label);
});

// Watermark
add(plot, "text", { class: "watermark big", x: "50%", y: 259 }, "stpRNG2, 5");
add(plot, "text", { class: "watermark sub", x: "50%", y: 293 }, "Step Index 200");

// Supply and demand zones
box("zone", -1, 37.5, 929, 27);
line("zone-mid", 0, 50.5, 928, 50.5);
box("zone", 163.5, 277.5, 428, 24);
line("zone-mid", 164, 289.5, 591, 289.5);
box("zone", 411.5, 347.5, 708, 24);
line("zone-dots", 412, 359.5, 1120, 359.5);

// Long position
box("profit", 447, 48, 409, 307);
box("profit-run", 504, 208, 352, 147);
box("stop", 447, 357, 409, 27);
line("level", 447, 356.5, 856, 356.5);
line("level", 0, 354.5, "100%", 354.5);
line("run-line", 508, 354, 640, 208);

// Swings of the price path, x and y inside the plot
const swings = [
    [1,206],[4,218],[8,229],[12,237],[15,251],[18,239],[21,221],[26,216],[29,231],[34,221],[38,221],[41,216],
    [44,213],[45,226],[49,216],[53,226],[56,233],[60,231],[62,243],[65,229],[68,237],[71,223],[74,211],[78,201],
    [82,190],[85,199],[88,196],[91,203],[94,214],[96,226],[98,241],[100,226],[103,213],[106,208],[110,221],
    [113,231],[116,216],[119,226],[121,249],[123,236],[127,216],[129,226],[131,241],[134,251],[138,261],[140,251],
    [144,240],[147,271],[149,279],[152,275],[155,256],[157,250],[161,263],[163,276],[166,289],[170,304],[173,291],
    [177,301],[180,279],[182,273],[185,286],[187,279],[190,291],[193,283],[195,294],[197,301],[201,311],[203,316],
    [206,301],[208,291],[210,306],[213,316],[216,301],[219,289],[223,286],[228,276],[231,279],[233,289],[236,261],
    [240,271],[244,251],[248,266],[252,256],[255,276],[257,296],[260,296],[262,281],[264,261],[268,233],[271,246],
    [274,251],[278,256],[281,236],[284,213],[287,249],[289,259],[292,241],[295,236],[298,226],[301,216],[304,206],
    [308,201],[310,209],[313,226],[317,241],[321,256],[325,266],[328,254],[331,263],[335,266],[339,271],[342,256],
    [345,271],[348,291],[351,306],[354,316],[357,329],[360,328],[363,336],[366,326],[369,326],[373,304],[376,316],
    [379,328],[382,311],[385,296],[388,291],[391,296],[395,306],[399,318],[403,336],[406,353],[408,363],[411,368],
    [414,346],[416,329],[419,316],[423,308],[426,321],[429,339],[431,341],[434,326],[437,311],[440,288],[443,276],
    [446,271],[449,289],[451,296],[454,311],[457,301],[460,316],[463,329],[466,321],[470,306],[473,321],[476,336],
    [478,321],[481,306],[485,296],[489,296],[493,296],[496,296],[499,311],[502,321],[504,336],[507,354],[510,336],
    [513,343],[517,326],[521,346],[524,353],[527,336],[530,326],[533,331],[535,351],[538,371],[540,374],[543,361],
    [545,339],[547,341],[550,351],[552,331],[555,326],[558,336],[561,323],[565,329],[567,316],[569,301],[572,296],
    [576,276],[578,263],[581,256],[584,261],[587,264],[590,266],[593,269],[596,256],[600,236],[603,231],[606,241],
    [608,246],[612,236],[615,221],[618,226],[621,216],[624,216],[627,221],[630,226],[633,213],[636,196],[640,205]
];

function swingY(x) {
    for (let i = 1; i < swings.length; i++) {
        const [x0, y0] = swings[i - 1];
        const [x1, y1] = swings[i];
        if (x <= x1) return y0 + (y1 - y0) * (x - x0) / (x1 - x0);
    }
    return swings[swings.length - 1][1];
}

// Small repeatable noise for the wicks
let seed = 7;
function noise() {
    seed = (seed * 16807) % 2147483647;
    return seed / 2147483647;
}

let previous = swingY(1);
for (let x = 1; x <= 640; x += BAR_STEP) {
    const y = swingY(x);
    const top = Math.min(previous, y) - 1 - noise() * 8;
    const bottom = Math.max(previous, y) + 1 + noise() * 8;
    let cls = y < previous ? "up" : "down";
    const mix = noise();
    if (mix < 0.14) cls = "flat";
    else if (mix < 0.25) cls = cls === "up" ? "down" : "up";
    line(cls, x, top, x, bottom);
    previous = y;
}

line("last-price", 0, 207.5, "100%", 207.5);

// Crosshair
line("crosshair", 0, 21.5, "100%", 21.5);
line("crosshair", 588.5, 0, 588.5, "100%");
line("pointer", 580, 21.5, 596, 21.5);
line("pointer", 588.5, 13, 588.5, 29);

// Axis tags
function priceTag(y, price, color, height, dark) {
    add(priceAxis, "rect", { x: 1, y: y - height / 2, width: 52, height, rx: 1, fill: color });
    add(priceAxis, "text", { class: dark ? "tag-dark" : "tag-text", x: 27, y: y + 3 }, formatPrice(price));
}
priceTag(21, 10885.4858, "#4a4a4a", 14);
priceTag(48, 10875.2457, "#1aa398", 12);
priceTag(207, 10813.6, "#e0234f", 12);
priceTag(355, 10756.7828, "#9b9aa6", 12, true);
priceTag(366, 10756.2119, "#85858e", 12);
priceTag(383, 10745.7939, "#77777f", 12);

add(timeAxis, "rect", { x: 543, y: 2, width: 90, height: 16, rx: 1, fill: "#3f3f3f" });
add(timeAxis, "text", { class: "tag-text", x: 588, y: 14 }, "Sun 02 Nov '25 \u00a0 02:50");
```
